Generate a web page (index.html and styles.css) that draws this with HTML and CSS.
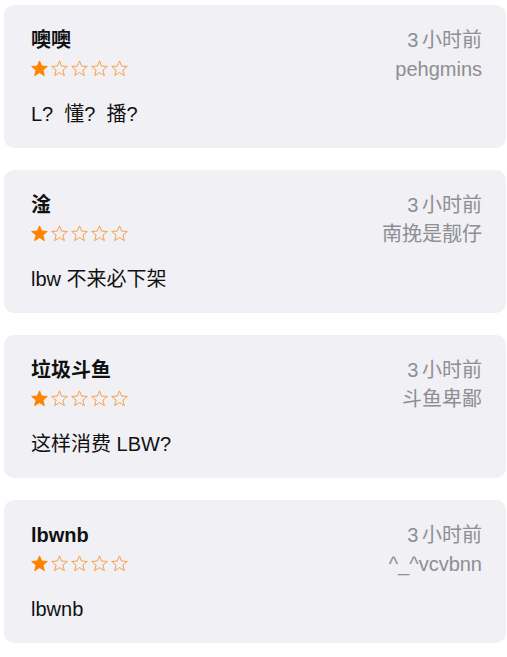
FILE: index.html
```html
<!DOCTYPE html>
<html lang="zh">
<head>
  <meta charset="UTF-8">
  <title>评论</title>
  <link rel="stylesheet" href="styles.css">
</head>
<body>
  <svg width="0" height="0" class="defs">
    <defs>
      <path id="star" d="M8.5 .9L10.62 6.09 16.3 6.44 11.92 10.11 13.32 15.6 8.5 12.6 3.68 15.6 5.08 10.11.7 6.44 6.38 6.09Z"/>
    </defs>
  </svg>

  <div class="list">
    <div class="review">
      <div class="head">
        <div class="left">
          <div class="title">噢噢</div>
          <div class="stars">
            <svg class="on"><use href="#star"/></svg>
            <svg><use href="#star"/></svg>
            <svg><use href="#star"/></svg>
            <svg><use href="#star"/></svg>
            <svg><use href="#star"/></svg>
          </div>
        </div>
        <div class="meta">
          <div class="time">3 小时前</div>
          <div class="user">pehgmins</div>
        </div>
      </div>
      <p class="body">L?&nbsp; 懂?&nbsp; 播?</p>
    </div>

    <div class="review">
      <div class="head">
        <div class="left">
          <div class="title">淦</div>
          <div class="stars">
            <svg class="on"><use href="#star"/></svg>
            <svg><use href="#star"/></svg>
            <svg><use href="#star"/></svg>
            <svg><use href="#star"/></svg>
            <svg><use href="#star"/></svg>
          </div>
        </div>
        <div class="meta">
          <div class="time">3 小时前</div>
          <div class="user">南挽是靓仔</div>
        </div>
      </div>
      <p class="body">lbw 不来必下架</p>
    </div>

    <div class="review">
      <div class="head">
        <div class="left">
          <div class="title">垃圾斗鱼</div>
          <div class="stars">
            <svg class="on"><use href="#star"/></svg>
            <svg><use href="#star"/></svg>
            <svg><use href="#star"/></svg>
            <svg><use href="#star"/></svg>
            <svg><use href="#star"/></svg>
          </div>
        </div>
        <div class="meta">
          <div class="time">3 小时前</div>
          <div class="user">斗鱼卑鄙</div>
        </div>
      </div>
      <p class="body">这样消费 LBW?</p>
    </div>

    <div class="review">
      <div class="head">
        <div class="left">
          <div class="title">lbwnb</div>
          <div class="stars">
            <svg class="on"><use href="#star"/></svg>
            <svg><use href="#star"/></svg>
            <svg><use href="#star"/></svg>
            <svg><use href="#star"/></svg>
            <svg><use href="#star"/></svg>
          </div>
        </div>
        <div class="meta">
          <div class="time">3 小时前</div>
          <div class="user">^_^vcvbnn</div>
        </div>
      </div>
      <p class="body">lbwnb</p>
    </div>
  </div>
</body>
</html>
```

FILE: styles.css
```css
body {
  margin: 0;
  padding: 5px 1px 0 4px;
  background: #fff;
  font-family: "Liberation Sans", "Noto Sans CJK SC", sans-serif;
  color: #111;
}
.defs {
  position: absolute;
}
.list {
  display: flex;
  flex-direction: column;
  gap: 22px;
}
.review {
  background: #f0f0f5;
  border-radius: 10px;
  height: 143px;
  box-sizing: border-box;
  padding: 21px 24px 0 27px;
}
.head {
  display: flex;
  justify-content: space-between;
}
.title {
  font-size: 20px;
  font-weight: bold;
  line-height: 28px;
}
.stars {
  display: flex;
  gap: 3px;
  margin-top: 6px;
}
.stars svg {
  width: 17px;
  height: 17px;
  fill: none;
  stroke: #f7a04a;
  stroke-width: 1;
}
.stars svg.on {
  fill: #ff8200;
  stroke: #ff8200;
}
.meta {
  text-align: right;
  color: #8e8e93;
  font-size: 20px;
  line-height: 29px;
}
.time {
  word-spacing: -2px;
}
.body {
  margin: 16px 0 0;
  font-size: 20px;
  line-height: 28px;
}
```
